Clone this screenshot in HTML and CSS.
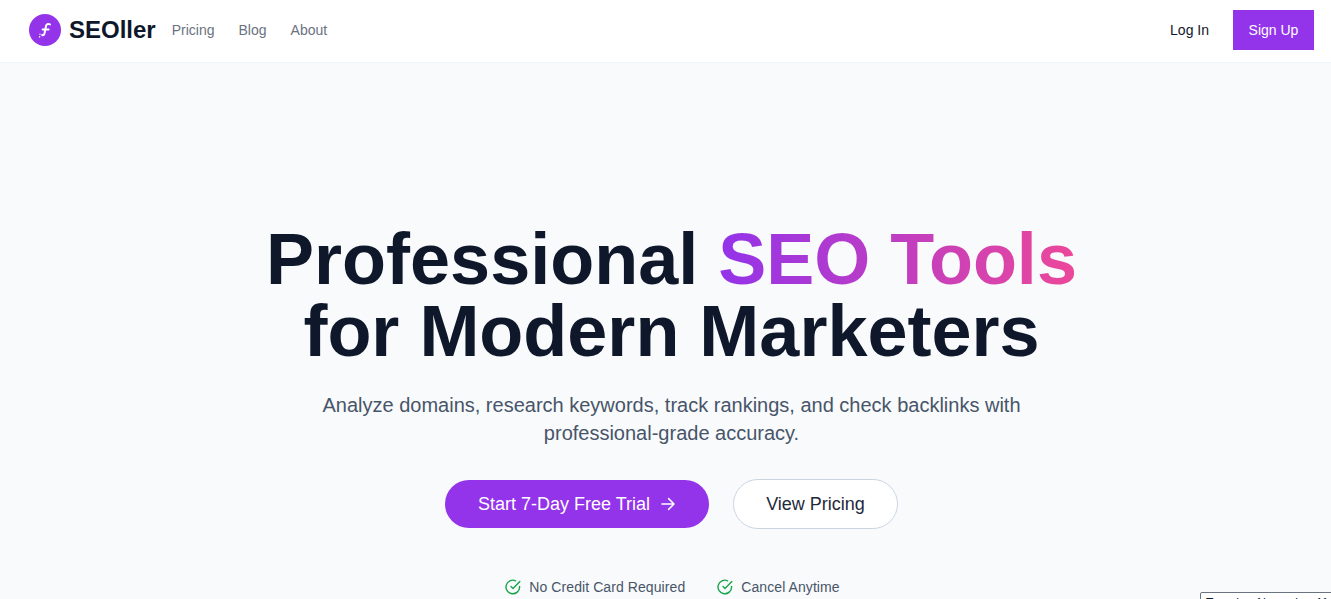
FILE: index.html
```html
<!DOCTYPE html>
<html lang="en">

<head>
  <meta charset="UTF-8">
  <meta name="viewport" content="width=device-width, initial-scale=1.0">
  <title>SEOller</title>
  <link rel="stylesheet" href="styles.css">
</head>

<body>
  <header class="navbar">
    <div class="nav-left">
      <a class="brand" href="#">
        <span class="brand-icon">
          <svg width="16" height="18" viewBox="0 0 16 18" fill="none" stroke="#fff" stroke-width="2" stroke-linecap="round">
            <path d="M13 3.4C10.8 2.4 9.5 3 9 5L7.6 12C7.2 14 6.4 14.6 5.2 14" />
            <path d="M5.6 8.4H11.6" />
            <path d="M3 13.2V13.3M2.6 15.8V15.9" stroke-width="1.4" />
          </svg>
        </span>
        <span class="brand-name">SEOller</span>
      </a>
      <nav class="nav-links">
        <a href="#">Pricing</a>
        <a href="#">Blog</a>
        <a href="#">About</a>
      </nav>
    </div>
    <div class="nav-right">
      <a class="login" href="#">Log In</a>
      <a class="signup" href="#">Sign Up</a>
    </div>
  </header>

  <main class="hero">
    <h1>Professional <span class="gradient-text">SEO Tools</span><br>for Modern Marketers</h1>
    <p class="lead">Analyze domains, research keywords, track rankings, and check backlinks with professional-grade accuracy.</p>
    <div class="hero-actions">
      <a class="btn btn-primary" href="#">
        Start 7-Day Free Trial
        <svg width="16" height="16" viewBox="0 0 16 16" fill="none" stroke="currentColor" stroke-width="1.5" stroke-linecap="round" stroke-linejoin="round">
          <path d="M2 8H14M8.6 2.6L14 8L8.6 13.4" />
        </svg>
      </a>
      <a class="btn btn-outline" href="#">View Pricing</a>
    </div>
    <ul class="perks">
      <li>
        <svg width="16" height="16" viewBox="0 0 16 16" fill="none" stroke="#16a34a" stroke-width="1.4" stroke-linecap="round" stroke-linejoin="round">
          <path d="M14.6 7.4V8A6.8 6.8 0 1 1 10.6 1.8" />
          <path d="M14.8 2.6L8 9.5L6 7.5" />
        </svg>
        No Credit Card Required
      </li>
      <li>
        <svg width="16" height="16" viewBox="0 0 16 16" fill="none" stroke="#16a34a" stroke-width="1.4" stroke-linecap="round" stroke-linejoin="round">
          <path d="M14.6 7.4V8A6.8 6.8 0 1 1 10.6 1.8" />
          <path d="M14.8 2.6L8 9.5L6 7.5" />
        </svg>
        Cancel Anytime
      </li>
    </ul>
  </main>

  <div class="date-widget">Tuesday, November 11</div>
</body>

</html>
```

FILE: styles.css
```css
* {
  box-sizing: border-box;
}

html, body {
  height: 100%;
}

body {
  margin: 0;
  overflow: hidden;
  background: #f9fafb;
  color: #0f172a;
  font-family: "Liberation Sans", Arial, sans-serif;
}

a {
  text-decoration: none;
  color: inherit;
}

.navbar {
  display: flex;
  justify-content: space-between;
  align-items: center;
  height: 63px;
  padding: 0 17px 3px 29px;
  background: #fff;
  border-bottom: 1px solid #f1f5f9;
}

.nav-left {
  display: flex;
  align-items: center;
  gap: 16px;
}

.brand {
  display: flex;
  align-items: center;
  gap: 8px;
}

.brand-icon {
  display: flex;
  align-items: center;
  justify-content: center;
  width: 32px;
  height: 32px;
  border-radius: 50%;
  background: #9333ea;
}

.brand-name {
  font-size: 24px;
  font-weight: 700;
  color: #0f172a;
}

.nav-links {
  display: flex;
  gap: 24px;
}

.nav-links a {
  font-size: 14px;
  color: #6b7280;
}

.nav-right {
  display: flex;
  align-items: center;
  gap: 24px;
}

.login {
  font-size: 14px;
  color: #0f172a;
}

.signup {
  display: block;
  width: 81px;
  padding: 12px 0;
  background: #9333ea;
  color: #fff;
  font-size: 14px;
  line-height: 16px;
  text-align: center;
}

.hero {
  display: flex;
  flex-direction: column;
  align-items: center;
  padding: 160px 0 0 12px;
  text-align: center;
}

h1 {
  margin: 0;
  font-size: 72px;
  line-height: 72px;
  font-weight: 700;
  color: #0f172a;
}

.gradient-text {
  background: linear-gradient(90deg, #9333ea, #ec4899);
  -webkit-background-clip: text;
  background-clip: text;
  color: transparent;
}

.lead {
  width: 768px;
  margin: 24px 0 0;
  font-size: 20px;
  line-height: 28px;
  color: #475569;
}

.hero-actions {
  display: flex;
  align-items: center;
  gap: 24px;
  margin-top: 32px;
}

.btn {
  display: flex;
  align-items: center;
  justify-content: center;
  gap: 10px;
  border-radius: 999px;
  font-size: 18px;
}

.btn-primary {
  width: 264px;
  height: 48px;
  background: #9333ea;
  color: #fff;
}

.btn-outline {
  width: 165px;
  height: 50px;
  background: #fff;
  border: 1px solid #cbd5e1;
  color: #1e293b;
}

.perks {
  display: flex;
  gap: 32px;
  margin: 48px 0 0;
  padding: 0 0 0 2px;
  list-style: none;
}

.perks li {
  display: flex;
  align-items: center;
  gap: 8px;
  font-size: 14px;
  line-height: 20px;
  letter-spacing: 0.08px;
  color: #475569;
}

/* sits over the page corner, cut off by the window */
.date-widget {
  position: fixed;
  left: 1200px;
  top: 592px;
  width: 180px;
  height: 30px;
  padding: 2px 5px;
  background: #fff;
  border: 1px solid #6b7280;
  border-radius: 2px;
  font-size: 12px;
  line-height: 16px;
  color: #0f172a;
  white-space: nowrap;
}
```
